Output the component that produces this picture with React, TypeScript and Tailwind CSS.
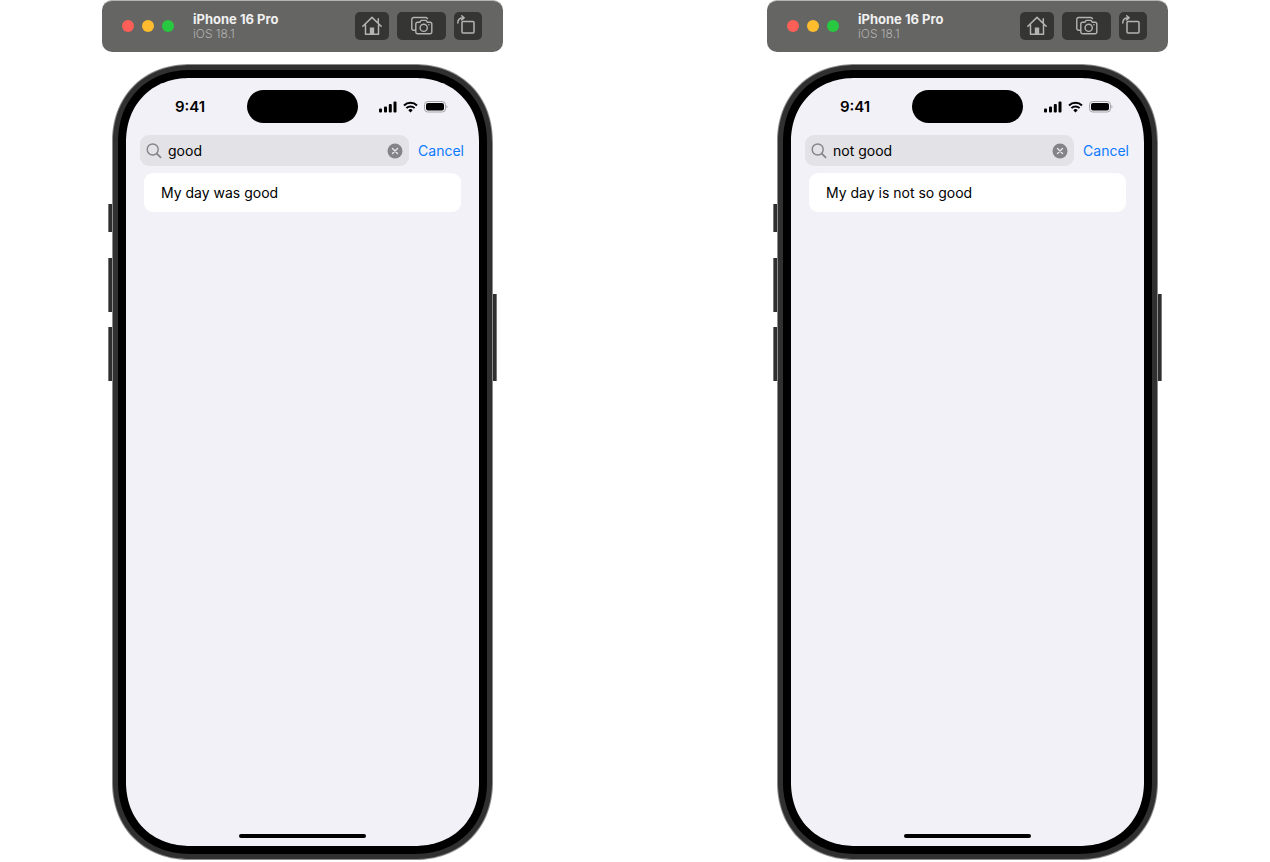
import React from 'react';

type SimulatorProps = {
  id: string;
  query: string;
  result: string;
};

const HomeIcon = () => (
  <svg className="h-5 w-5" viewBox="0 0 20 20" fill="none" stroke="#b4b4b2" strokeWidth="1.5" strokeLinejoin="round" strokeLinecap="round" aria-hidden="true">
    <path d="M.8 10.3 10 1.400l9.200 8.900M3.500 8.500v9.700h13V8.500M16.300 6.600V2.800" />
    <path d="M7.800 18v-6.500h4.400V18z" fill="#b4b4b2" stroke="none" />
  </svg>
);

const ScreenshotIcon = () => (
  <svg className="h-5 w-[22px]" viewBox="0 0 22 20" fill="none" stroke="#b4b4b2" strokeWidth="1.400" strokeLinejoin="round" aria-hidden="true">
    <path d="M4.800 14.300H2.600A1.800 1.800 0 0 1 .8 12.500V3.300A1.800 1.800 0 0 1 2.600 1.500h12.100a1.800 1.800 0 0 1 1.800 1.800" />
    <path d="M6.600 6.200h2.200l1.400-1.800h4.800l1.400 1.800h2.600a1.800 1.800 0 0 1 1.800 1.800v8a1.800 1.800 0 0 1-1.800 1.800H6.600a1.800 1.800 0 0 1-1.800-1.800V8a1.800 1.800 0 0 1 1.800-1.800z" />
    <circle cx="12.700" cy="11.800" r="3.600" />
    <circle cx="17.900" cy="8.700" r=".8" fill="#b4b4b2" stroke="none" />
  </svg>
);

const RotateIcon = () => (
  <svg className="h-5 w-5 overflow-visible" viewBox="0 0 20 20" fill="none" stroke="#b4b4b2" strokeWidth="1.500" strokeLinejoin="round" strokeLinecap="round" aria-hidden="true">
    <rect x="6" y="5.500" width="12" height="11.500" rx="1" />
    <path d="M1.800 7C1.800 3.500 3.600 1.800 7.800 1.800M5.700-.3l2.500 2.100-2.500 2.100" />
  </svg>
);

const SignalIcon = () => (
  <svg className="h-3 w-[18px]" viewBox="0 0 18 12" aria-hidden="true">
    <rect x="0" y="7.500" width="3" height="4" rx="1" />
    <rect x="5" y="5.500" width="3" height="6" rx="1" />
    <rect x="9.800" y="3" width="3" height="8.500" rx="1" />
    <rect x="14.500" y=".5" width="3" height="11" rx="1" />
  </svg>
);

const WifiIcon = () => (
  <svg className="h-3 w-[15px]" viewBox="0 0 15 12" fill="none" stroke="#000" strokeWidth="2" aria-hidden="true">
    <path d="M1 4.500a9.300 9.300 0 0 1 13 0M3.400 7.100a5.800 5.800 0 0 1 8.200 0" />
    <path d="M7.500 11.400 5.300 9.200a3.100 3.100 0 0 1 4.400 0z" fill="#000" stroke="none" />
  </svg>
);

const BatteryIcon = () => (
  <svg className="h-3 w-6" viewBox="0 0 24 12" aria-hidden="true">
    <rect x=".5" y=".5" width="21" height="10.500" rx="3.200" fill="none" stroke="#a5a5a8" />
    <rect x="2" y="2" width="18" height="7.500" rx="2" />
    <path d="M22.500 4v3.500c1.300-.6 1.300-2.900 0-3.500z" fill="#a5a5a8" />
  </svg>
);

const SearchIcon = () => (
  <svg className="h-4 w-4" viewBox="0 0 16 16" fill="none" stroke="#838388" strokeWidth="1.400" strokeLinecap="round" aria-hidden="true">
    <circle cx="6.700" cy="6.500" r="5.500" />
    <path d="m10.800 10.600 3.800 3.800" strokeWidth="1.700" />
  </svg>
);

const ClearIcon = () => (
  <svg className="h-4 w-4" viewBox="0 0 16 16" aria-hidden="true">
    <circle cx="8" cy="8" r="7.500" fill="#838388" />
    <path d="m5.500 5.500 5 5m0-5-5 5" stroke="#e9e9ec" strokeWidth="1.400" strokeLinecap="round" />
  </svg>
);

const Toolbar = () => (
  <header className="flex h-[52px] items-center rounded-[10px] border-t border-[#b3b5b1] bg-[#656563] pr-[21px] pb-px pl-5">
    <div className="flex gap-2">
      <button type="button" aria-label="Close" className="h-3 w-3 rounded-full bg-[#ff5f57]" />
      <button type="button" aria-label="Minimize" className="h-3 w-3 rounded-full bg-[#febc2e]" />
      <button type="button" aria-label="Zoom" className="h-3 w-3 rounded-full bg-[#28c840]" />
    </div>
    <div className="ml-[19px] flex-1">
      <h2 className="text-[13px] leading-4 font-bold text-[#f0f0f0]">iPhone 16 Pro</h2>
      <p className="text-xs leading-[14px] font-light text-[#b4b4b2]">iOS 18.1</p>
    </div>
    <div className="flex gap-2">
      <button type="button" aria-label="Home" className="flex h-7 w-[34px] items-center justify-center rounded-[5px] bg-[#353533]">
        <HomeIcon />
      </button>
      <button type="button" aria-label="Screenshot" className="flex h-7 w-[49px] items-center justify-center rounded-[5px] bg-[#353533]">
        <ScreenshotIcon />
      </button>
      <button type="button" aria-label="Rotate" className="flex h-7 w-7 items-center justify-center rounded-[5px] bg-[#353533] pr-1">
        <RotateIcon />
      </button>
    </div>
  </header>
);

const StatusBar = () => (
  <div className="grid grid-cols-[1fr_auto_1fr] items-center pt-3">
    <span className="pl-[7px] text-center text-[15px] leading-5 font-semibold">9:41</span>
    <div className="h-[33px] w-[111px] rounded-full bg-black" />
    <div className="flex items-center gap-[6px] pl-[21px]">
      <SignalIcon />
      <WifiIcon />
      <BatteryIcon />
    </div>
  </div>
);

const Simulator = ({ id, query, result }: SimulatorProps) => (
  <section className="w-full max-w-[401px]">
    <Toolbar />
    <div className="mt-3 flex justify-center">
      <div className="flex flex-col pt-[140px]">
        <div className="h-7 w-1 border-l border-[#777] bg-[#2f2f2f]" />
        <div className="mt-[26px] h-[54px] w-1 border-l border-[#777] bg-[#2f2f2f]" />
        <div className="mt-[15px] h-[54px] w-1 border-l border-[#777] bg-[#2f2f2f]" />
      </div>

      <div className="max-w-[381px] flex-1 rounded-[78px] bg-[#8c8c8c] p-px [corner-shape:superellipse(1.1)]">
        <div className="rounded-[77px] bg-[#303030] p-[5px] [corner-shape:superellipse(1.1)]">
          <div className="rounded-[72px] bg-black p-2 [corner-shape:superellipse(1.1)]">
            <div className="flex min-h-[768px] flex-col overflow-hidden rounded-[64px] bg-[#f2f1f7] text-sm leading-5 [corner-shape:superellipse(1.1)]">
              <StatusBar />

              <form className="mt-3 flex items-center pr-[15px] pl-[14px]" onSubmit={(e) => e.preventDefault()}>
                <div className="flex h-[31px] min-w-0 flex-1 items-center rounded-[9px] bg-[#e3e2e7] px-[6px]">
                  <label htmlFor={id}>
                    <SearchIcon />
                  </label>
                  <input
                    id={id}
                    type="text"
                    aria-label="Search"
                    defaultValue={query}
                    className="ml-[6px] min-w-0 flex-1 bg-transparent text-black outline-none"
                  />
                  <button type="button" aria-label="Clear search">
                    <ClearIcon />
                  </button>
                </div>
                <button type="button" className="ml-[9px] text-[#0a7aff]">Cancel</button>
              </form>

              <ul className="mx-[18px] mt-[7px]">
                <li className="rounded-[9px] bg-white px-[17px] py-[9px] leading-[21px] text-black">{result}</li>
              </ul>

              <div className="mx-auto mt-auto mb-2 h-1 w-[127px] rounded-full bg-black" />
            </div>
          </div>
        </div>
      </div>

      <div className="pt-[230px]">
        <div className="h-[87px] w-1 border-r border-[#777] bg-[#2f2f2f]" />
      </div>
    </div>
  </section>
);

const App = () => {
  const simulators = [
    { id: 'search-good', query: 'good', result: 'My day was good' },
    { id: 'search-not-good', query: 'not good', result: 'My day is not so good' },
  ];

  return (
    <main className="grid grid-cols-2 justify-items-center gap-[60px] bg-white pb-0.5 font-['Inter',sans-serif]">
      {simulators.map((simulator) => (
        <Simulator key={simulator.id} {...simulator} />
      ))}
    </main>
  );
};

export default App;
